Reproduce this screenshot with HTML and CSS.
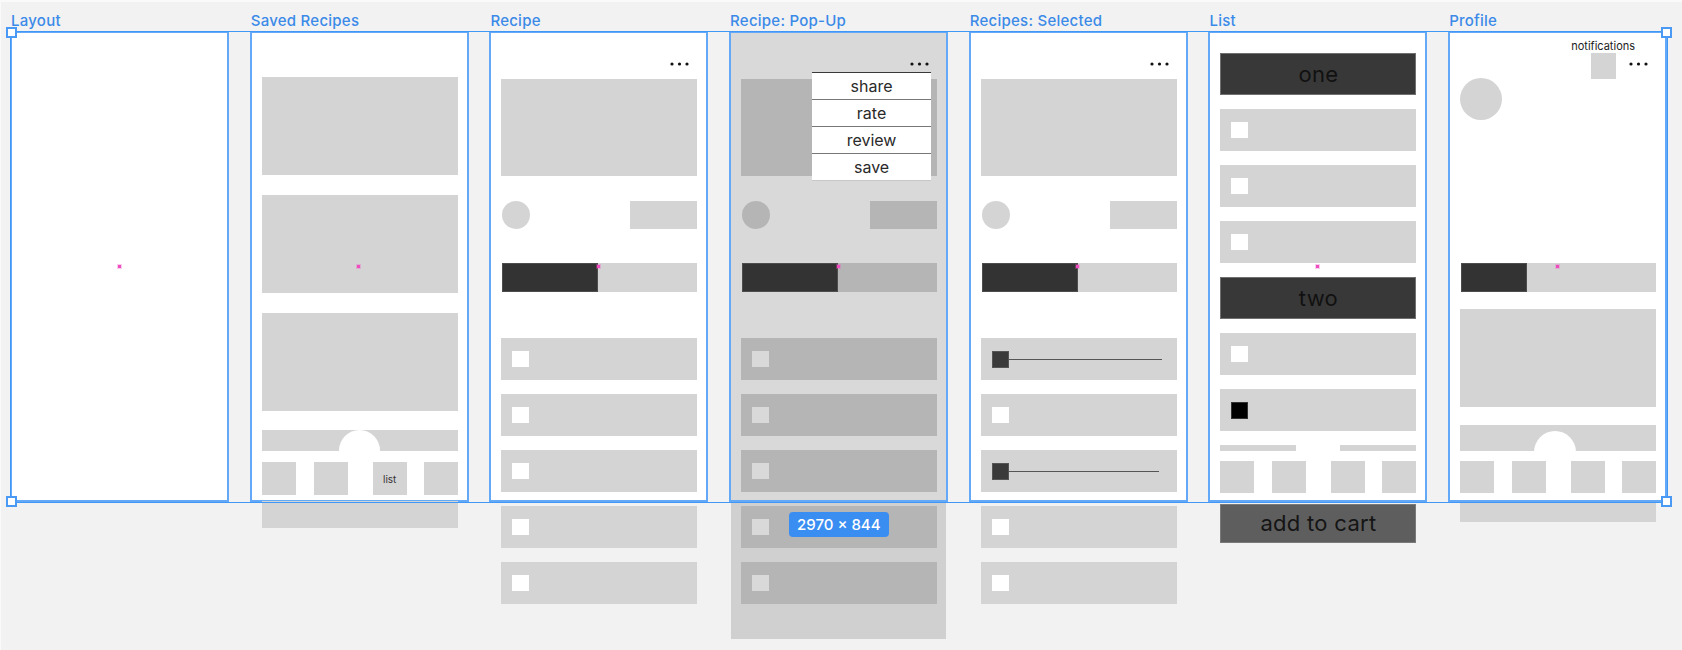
FILE: index.html
```html
<!DOCTYPE html>
<html lang="en">
<head>
<meta charset="utf-8">
<title>Recipe app wireframes</title>
<link rel="stylesheet" href="styles.css">
</head>
<body>
<div class="canvas">

  <div class="board">
    <div class="label">Layout</div>
    <div class="frame"><span class="pin"></span></div>
  </div>

  <div class="board">
    <div class="label">Saved Recipes</div>
    <div class="frame saved">
      <div class="stack gap20">
        <div class="block tall"></div>
        <div class="block tall"></div>
        <div class="block tall"></div>
      </div>
      <div class="nav"><span class="hump"></span></div>
      <div class="tabs tabs-33">
        <div class="tab-group"><div class="tab"></div><div class="tab"></div></div>
        <div class="tab-group right"><div class="tab">list</div><div class="tab"></div></div>
      </div>
      <div class="block footer"></div>
      <span class="pin"></span>
    </div>
  </div>

  <div class="board">
    <div class="label">Recipe</div>
    <div class="frame recipe">
      <div class="dots-row"><svg class="dots" viewBox="0 0 19 4"><circle cx="2" cy="2" r="1.6"/><circle cx="9.5" cy="2" r="1.6"/><circle cx="17" cy="2" r="1.6"/></svg></div>
      <div class="block hero"></div>
      <div class="meta"><span class="avatar"></span><span class="chip"></span></div>
      <div class="progress"><span class="fill" style="width:96px"></span></div>
      <div class="stack rows">
        <div class="row"><span class="check"></span></div>
        <div class="row"><span class="check"></span></div>
        <div class="row"><span class="check"></span></div>
        <div class="row"><span class="check"></span></div>
        <div class="row"><span class="check"></span></div>
      </div>
      <span class="pin"></span>
    </div>
  </div>

  <div class="board">
    <div class="label">Recipe: Pop-Up</div>
    <div class="frame recipe popup">
      <div class="dots-row"><svg class="dots" viewBox="0 0 19 4"><circle cx="2" cy="2" r="1.6"/><circle cx="9.5" cy="2" r="1.6"/><circle cx="17" cy="2" r="1.6"/></svg></div>
      <div class="block hero"></div>
      <div class="meta"><span class="avatar"></span><span class="chip"></span></div>
      <div class="progress"><span class="fill" style="width:96px"></span></div>
      <div class="stack rows">
        <div class="row"><span class="check"></span></div>
        <div class="row"><span class="check"></span></div>
        <div class="row"><span class="check"></span></div>
        <div class="row"><span class="check"></span></div>
        <div class="row"><span class="check"></span></div>
      </div>
      <div class="menu">
        <div class="menu-item">share</div>
        <div class="menu-item">rate</div>
        <div class="menu-item">review</div>
        <div class="menu-item">save</div>
      </div>
      <span class="pin"></span>
    </div>
  </div>

  <div class="board">
    <div class="label">Recipes: Selected</div>
    <div class="frame recipe">
      <div class="dots-row"><svg class="dots" viewBox="0 0 19 4"><circle cx="2" cy="2" r="1.6"/><circle cx="9.5" cy="2" r="1.6"/><circle cx="17" cy="2" r="1.6"/></svg></div>
      <div class="block hero"></div>
      <div class="meta"><span class="avatar"></span><span class="chip"></span></div>
      <div class="progress"><span class="fill" style="width:96px"></span></div>
      <div class="stack rows">
        <div class="row"><span class="knob"></span><span class="track"></span></div>
        <div class="row"><span class="check"></span></div>
        <div class="row"><span class="knob"></span><span class="track short"></span></div>
        <div class="row"><span class="check"></span></div>
        <div class="row"><span class="check"></span></div>
      </div>
      <span class="pin"></span>
    </div>
  </div>

  <div class="board">
    <div class="label">List</div>
    <div class="frame list">
      <div class="stack">
        <div class="heading">one</div>
        <div class="row"><span class="check"></span></div>
        <div class="row"><span class="check"></span></div>
        <div class="row"><span class="check"></span></div>
        <div class="heading">two</div>
        <div class="row"><span class="check"></span></div>
        <div class="row"><span class="check done"></span></div>
      </div>
      <div class="navshort"><span></span><span></span></div>
      <div class="tabs">
        <div class="tab-group"><div class="tab"></div><div class="tab"></div></div>
        <div class="tab-group right"><div class="tab"></div><div class="tab"></div></div>
      </div>
      <div class="cart">add to cart</div>
      <span class="pin"></span>
    </div>
  </div>

  <div class="board">
    <div class="label">Profile</div>
    <div class="frame profile">
      <div class="profile-top">
        <div class="notif">
          <span class="notif-text">notifications</span>
          <span class="notif-box"></span>
        </div>
        <div class="dots-wrap"><svg class="dots" viewBox="0 0 19 4"><circle cx="2" cy="2" r="1.6"/><circle cx="9.5" cy="2" r="1.6"/><circle cx="17" cy="2" r="1.6"/></svg></div>
      </div>
      <span class="big-avatar"></span>
      <div class="progress"><span class="fill" style="width:66px"></span></div>
      <div class="block big"></div>
      <div class="nav nav-tall"><span class="hump"></span></div>
      <div class="tabs">
        <div class="tab-group"><div class="tab"></div><div class="tab"></div></div>
        <div class="tab-group right"><div class="tab"></div><div class="tab"></div></div>
      </div>
      <div class="block footer-short"></div>
      <span class="pin"></span>
    </div>
  </div>

  <div class="selection">
    <span class="handle h-tl"></span>
    <span class="handle h-tr"></span>
    <span class="handle h-bl"></span>
    <span class="handle h-br"></span>
  </div>
  <div class="badge">2970 × 844</div>
</div>
</body>
</html>
```

FILE: styles.css
```css
* {
  box-sizing: border-box;
  margin: 0;
  padding: 0;
}

html, body {
  width: 1682px;
  height: 650px;
  overflow: hidden;
}

body {
  background: #f2f2f2;
  font-family: Inter, "Liberation Sans", sans-serif;
  box-shadow: inset 1px 2px 0 #fafafa;
}

.canvas {
  position: relative;
  display: flex;
  gap: 20.7px;
  padding-left: 10px;
  height: 650px;
}

.board {
  width: 219px;
  flex: none;
  display: flex;
  flex-direction: column;
}

.label {
  height: 31px;
  padding: 12px 0 0 1px;
  font-size: 15px;
  line-height: 18px;
  font-weight: 500;
  letter-spacing: 0.25px;
  color: #3b8ae8;
  white-space: nowrap;
}

.frame {
  position: relative;
  isolation: isolate;
  height: 471px;
  flex: none;
  background: #fff;
  border: 2px solid #64a8f8;
  padding: 0 9px 0 10px;
  display: flex;
  flex-direction: column;
}

.frame > * {
  flex-shrink: 0;
}

.block {
  background: #d4d4d4;
}

.stack {
  display: flex;
  flex-direction: column;
  gap: 14px;
}

.stack > * {
  flex-shrink: 0;
}

.gap20 {
  gap: 20px;
}

/* pink centre pins */
.pin {
  position: absolute;
  left: 50%;
  top: 50%;
  width: 3px;
  height: 3px;
  margin: -2px 0 0 -2px;
  background: #ee4cbf;
  box-shadow: 0 0 0 1px rgba(240, 90, 200, 0.3);
  z-index: 3;
}

/* Saved recipes */
.saved {
  padding-top: 44px;
}

.tall {
  height: 98px;
}

.nav {
  position: relative;
  height: 21px;
  margin-top: 19px;
  background: #d4d4d4;
}

.hump {
  position: absolute;
  left: 50%;
  top: 0;
  width: 41px;
  height: 41px;
  margin-left: -21px;
  border-radius: 50%;
  background: #fff;
}

.tabs {
  position: relative;
  display: flex;
  justify-content: space-between;
  margin-top: 10px;
  height: 32px;
}

.tabs-33 {
  margin-top: 11px;
  height: 33px;
}

.tab-group {
  display: flex;
  gap: 18px;
}

.tab-group.right {
  gap: 17px;
}

.tab {
  width: 34px;
  height: 100%;
  background: #d4d4d4;
  display: flex;
  align-items: center;
  justify-content: center;
  font-size: 10px;
  color: #333;
}

.footer {
  height: 27px;
  margin-top: 6px;
}

/* Recipe */
.dots-row {
  display: flex;
  justify-content: flex-end;
  height: 4px;
  margin-top: 29px;
  padding-right: 8px;
}

.dots {
  display: block;
  width: 19px;
  height: 4px;
  fill: #111;
}

.hero {
  height: 97px;
  margin-top: 13px;
}

.meta {
  display: flex;
  justify-content: space-between;
  height: 28px;
  margin-top: 25px;
}

.avatar {
  width: 28px;
  height: 28px;
  margin-left: 1px;
  border-radius: 50%;
  background: #d4d4d4;
}

.chip {
  width: 67px;
  height: 28px;
  background: #d4d4d4;
}

.progress {
  display: flex;
  height: 29px;
  margin-top: 34px;
  margin-left: 1px;
  background: #d4d4d4;
}

.fill {
  height: 100%;
  background: #333;
  border: 1px solid #4d4d4d;
}

.rows {
  margin-top: 46px;
}

.row {
  height: 42px;
  display: flex;
  align-items: center;
  padding-left: 11px;
  background: #d4d4d4;
}

.check {
  width: 17px;
  height: 16px;
  background: #fff;
}

.check.done {
  height: 17px;
  background: #000;
  border: 1px solid #333;
}

.knob {
  flex: none;
  width: 17px;
  height: 17px;
  background: #3a3a3a;
  border: 1px solid #555;
}

.track {
  flex: 1;
  height: 1px;
  margin-right: 15px;
  background: #555;
}

.track.short {
  margin-right: 18px;
}

/* Pop-up state */
.popup {
  background: #d9d9d9;
}

.popup::after {
  content: "";
  position: absolute;
  left: 0;
  right: 0;
  top: calc(100% + 2px);
  height: 137px;
  background: #d0d0d0;
  z-index: -1;
}

.popup .block,
.popup .avatar,
.popup .chip,
.popup .progress,
.popup .row {
  background: #b5b5b5;
}

.popup .check {
  background: #d9d9d9;
}

.menu {
  position: absolute;
  left: 81px;
  top: 39px;
  width: 119px;
  background: #fff;
  border-top: 1px solid #3a3a3a;
  z-index: 2;
}

.menu-item {
  height: 27px;
  line-height: 26px;
  border-bottom: 1px solid #777;
  text-align: center;
  font-size: 16px;
  color: #2a2a2a;
}

.menu-item:last-child {
  border-bottom-color: #c8c8c8;
}

/* List */
.list {
  padding-top: 20px;
}

.heading {
  height: 42px;
  background: #383838;
  border: 1px solid #707070;
  color: #111;
  font-size: 22px;
  line-height: 40px;
  letter-spacing: 0.3px;
  text-align: center;
}

.navshort {
  display: flex;
  justify-content: space-between;
  height: 6px;
  margin-top: 14px;
}

.navshort span {
  width: 76px;
  background: #d4d4d4;
}

.cart {
  height: 39px;
  margin-top: 11px;
  background: #5e5e5e;
  border: 1px solid #7a7a7a;
  color: #151515;
  font-size: 22px;
  line-height: 37px;
  letter-spacing: 0.3px;
  text-align: center;
}

/* Profile */
.profile-top {
  display: flex;
  justify-content: flex-end;
  align-items: flex-start;
  padding-top: 7px;
}

.notif {
  display: flex;
  flex-direction: column;
  align-items: center;
  width: 64px;
}

.notif-text {
  font-size: 11px;
  line-height: 13px;
  color: #222;
  white-space: nowrap;
}

.notif-box {
  width: 25px;
  height: 26px;
  background: #d4d4d4;
}

.dots-wrap {
  margin: 22px 8px 0 -6px;
}

.big-avatar {
  width: 42px;
  height: 42px;
  margin-top: -1px;
  border-radius: 50%;
  background: #d4d4d4;
}

.profile .progress {
  margin-top: 143px;
}

.big {
  height: 98px;
  margin-top: 17px;
}

.nav-tall {
  height: 26px;
  margin-top: 18px;
}

.nav-tall .hump {
  top: 6px;
  width: 42px;
  height: 42px;
  margin-left: -24px;
}

.footer-short {
  height: 19px;
  margin-top: 10px;
}

/* Selection overlay */
.selection {
  position: absolute;
  left: 10px;
  top: 31px;
  width: 1658px;
  height: 472px;
  border: 1px solid #4197f6;
  z-index: 5;
  pointer-events: none;
}

.handle {
  position: absolute;
  width: 11px;
  height: 11px;
  background: #fff;
  border: 2px solid #4a9af5;
}

.h-tl { left: -5px; top: -5px; }
.h-tr { right: -5px; top: -5px; }
.h-bl { left: -5px; bottom: -5px; }
.h-br { right: -5px; bottom: -5px; }

.badge {
  position: absolute;
  left: 789px;
  top: 512px;
  height: 25px;
  padding: 0 8px;
  border-radius: 4px;
  background: #3a8ef2;
  color: #fff;
  font-size: 15px;
  font-weight: 500;
  line-height: 25px;
  white-space: nowrap;
  z-index: 6;
}
```
